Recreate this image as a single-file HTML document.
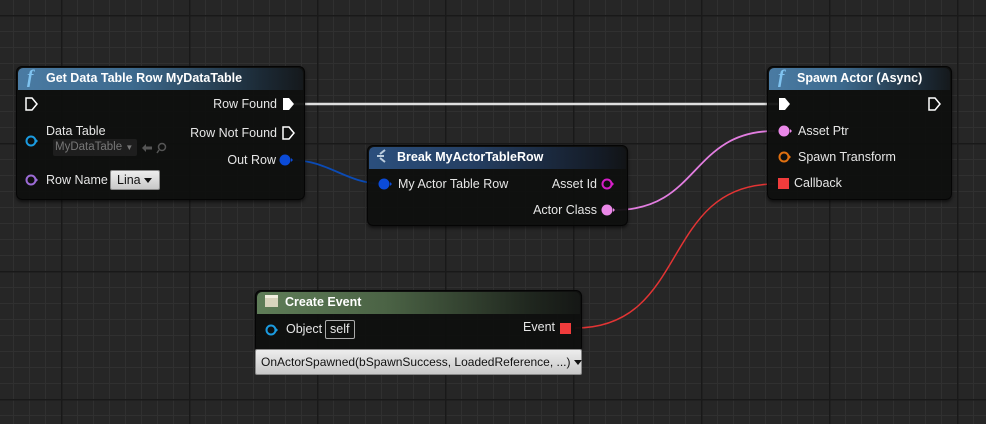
<!DOCTYPE html>
<html><head><meta charset="utf-8"><style>
*{box-sizing:border-box;margin:0;padding:0}
body{width:986px;height:424px;overflow:hidden;position:relative;font-family:"Liberation Sans","DejaVu Sans",sans-serif;font-size:12px;color:#e8e8e8;
background-color:#262626;
background-image:
linear-gradient(#191919 1.5px,transparent 1.5px),
linear-gradient(90deg,#191919 1.5px,transparent 1.5px),
linear-gradient(#303030 1px,transparent 1px),
linear-gradient(90deg,#303030 1px,transparent 1px);
background-size:128px 128px,128px 128px,16px 16px,16px 16px;
background-position:61px 15px,61px 15px,13px 15px,13px 15px;}
.node{position:absolute;background:rgba(14,15,14,0.94);border:1px solid #050505;border-radius:6px;box-shadow:0 2px 3px rgba(0,0,0,.6)}
.hdr{position:absolute;left:1px;right:1px;top:1px;height:22px;border-radius:5px 5px 0 0;font-weight:bold;font-size:12.5px;color:#fff;padding-left:28px;line-height:21px}
.blue{background:linear-gradient(90deg,#4a7ba3 0%,#3d6a8e 40%,#1c2a36 85%,#15191c 100%)}
.navy{background:linear-gradient(90deg,#2b4f7d 0%,#253f63 40%,#141b26 90%,#121416 100%)}
.green{background:linear-gradient(90deg,#5f7d58 0%,#4b6345 40%,#1f261e 85%,#151715 100%)}
.f{position:absolute;left:9px;top:-1px;font-family:"Liberation Serif",serif;font-style:italic;font-size:19px;color:#7fc3f0;font-weight:bold}
.t{position:absolute;white-space:nowrap;font-size:12.5px;color:#e6e6e6}
.r{position:absolute;white-space:nowrap;font-size:12.5px;color:#e6e6e6;text-align:right}
svg{position:absolute;left:0;top:0}
.dd{position:absolute;background:linear-gradient(#ededed,#c8c8c8);border:1px solid #888;border-radius:2px;color:#111;font-size:12.5px;white-space:nowrap}
.ar{display:inline-block;width:0;height:0;border-left:4px solid transparent;border-right:4px solid transparent;border-top:5px solid #111;vertical-align:middle;margin-left:3px}
</style></head><body>
<svg width="986" height="424">
<path d="M292 104 L778 104" stroke="#e0e0e0" stroke-width="2.5" fill="none"/>
<path d="M290 160 C330 160,345 184,385 184" stroke="#0b4bb5" stroke-width="1.8" fill="none"/>
<path d="M615 210 C700 210,690 131,775 131" stroke="#e27de0" stroke-width="1.8" fill="none"/>
<path d="M575 328 C690 328,660 184,775 184" stroke="#e33434" stroke-width="1.5" fill="none"/>
</svg>

<!-- Node 1 -->
<div class="node" style="left:16px;top:66px;width:289px;height:134px">
<div class="hdr blue"><span class="f">f</span>Get Data Table Row MyDataTable</div>
</div>
<svg width="986" height="424">
<path d="M26 98 h6 l5 6 l-5 6 h-6z" fill="none" stroke="#fff" stroke-width="1.5"/>
<path d="M283 98 h6 l5 6 l-5 6 h-6z" fill="#fff"/>
<path d="M283 127 h6 l5 6 l-5 6 h-6z" fill="none" stroke="#fff" stroke-width="1.5"/>
<circle cx="31" cy="141" r="4.5" fill="none" stroke="#1b9be0" stroke-width="2"/><path d="M36 139 l2 2 l-2 2z" fill="#1b9be0"/>
<circle cx="31" cy="180" r="4.5" fill="none" stroke="#9c6bd6" stroke-width="2"/><path d="M36 178 l2 2 l-2 2z" fill="#9c6bd6"/>
<circle cx="285" cy="160" r="5.5" fill="#0b4bd8"/><path d="M291 158 l2 2 l-2 2z" fill="#0b4bd8"/>
<path d="M142 148 l4 -4 v2.5 h6 v3 h-6 v2.5z" fill="#555"/>
<circle cx="162" cy="147" r="3.5" fill="none" stroke="#555" stroke-width="1.5"/><path d="M159 150 l-2 3" stroke="#555" stroke-width="1.5"/>
</svg>
<div class="r" style="right:709px;top:97px">Row Found</div>
<div class="r" style="right:709px;top:126px">Row Not Found</div>
<div class="r" style="right:710px;top:153px">Out Row</div>
<div class="t" style="left:46px;top:124px">Data Table</div>
<div style="position:absolute;left:53px;top:139px;width:84px;height:17px;background:#1e1e1e;border-radius:2px;color:#777;font-size:11.5px;padding:2px 0 0 2px">MyDataTable <span style="font-size:8px">▼</span></div>
<div class="t" style="left:46px;top:173px">Row Name</div>
<div class="dd" style="left:110px;top:170px;width:50px;height:20px;padding:2px 0 0 6px">Lina<span class="ar"></span></div>

<!-- Node 2 -->
<div class="node" style="left:367px;top:145px;width:261px;height:81px">
<div class="hdr navy">Break MyActorTableRow</div>
</div>
<svg width="986" height="424">
<path d="M377 156 h7 M380 154 l5 -4 M380 158 l5 4" stroke="#bcd" stroke-width="2" fill="none"/>
<circle cx="384" cy="184" r="5.5" fill="#0b4bd8"/><path d="M390 182 l2 2 l-2 2z" fill="#0b4bd8"/>
<circle cx="607" cy="184" r="4.5" fill="none" stroke="#d51ec8" stroke-width="2"/><path d="M612 182 l2 2 l-2 2z" fill="#d51ec8"/>
<circle cx="607" cy="210" r="5.5" fill="#ea88e8"/><path d="M613 208 l2 2 l-2 2z" fill="#ea88e8"/>
</svg>
<div class="t" style="left:398px;top:177px">My Actor Table Row</div>
<div class="r" style="right:389px;top:177px">Asset Id</div>
<div class="r" style="right:389px;top:203px">Actor Class</div>

<!-- Node 3 -->
<div class="node" style="left:767px;top:66px;width:185px;height:134px">
<div class="hdr blue"><span class="f">f</span>Spawn Actor (Async)</div>
</div>
<svg width="986" height="424">
<path d="M779 98 h6 l5 6 l-5 6 h-6z" fill="#fff"/>
<path d="M929 98 h6 l5 6 l-5 6 h-6z" fill="none" stroke="#fff" stroke-width="1.5"/>
<circle cx="784" cy="131" r="5.5" fill="#ea88e8"/><path d="M790 129 l2 2 l-2 2z" fill="#ea88e8"/>
<circle cx="784" cy="157" r="4.5" fill="none" stroke="#e07010" stroke-width="2"/><path d="M789 155 l2 2 l-2 2z" fill="#e07010"/>
<rect x="778" y="178" width="11" height="11" fill="#f03c3c"/>
</svg>
<div class="t" style="left:798px;top:124px">Asset Ptr</div>
<div class="t" style="left:798px;top:150px">Spawn Transform</div>
<div class="t" style="left:794px;top:176px">Callback</div>

<!-- Node 4 -->
<div class="node" style="left:255px;top:290px;width:327px;height:63px">
<div class="hdr green">Create Event</div>
</div>
<svg width="986" height="424">
<rect x="265" y="295" width="13" height="12" fill="#d8d4bd"/><rect x="265" y="295" width="13" height="3" fill="#f2efe0"/>
<circle cx="271" cy="330" r="4.5" fill="none" stroke="#1b9be0" stroke-width="2"/><path d="M276 328 l2 2 l-2 2z" fill="#1b9be0"/>
<rect x="560" y="323" width="11" height="11" fill="#f03c3c"/>
</svg>
<div class="t" style="left:286px;top:322px">Object</div>
<div style="position:absolute;left:325px;top:320px;width:30px;height:19px;border:1px solid #aaa;border-radius:2px;font-size:12.5px;padding:1px 0 0 4px">self</div>
<div class="r" style="right:431px;top:320px">Event</div>
<div class="dd" style="left:255px;top:349px;width:327px;height:26px;padding:5px 0 0 5px;font-size:12px">OnActorSpawned(bSpawnSuccess, LoadedReference, ...)<span class="ar"></span></div>
</body></html>
